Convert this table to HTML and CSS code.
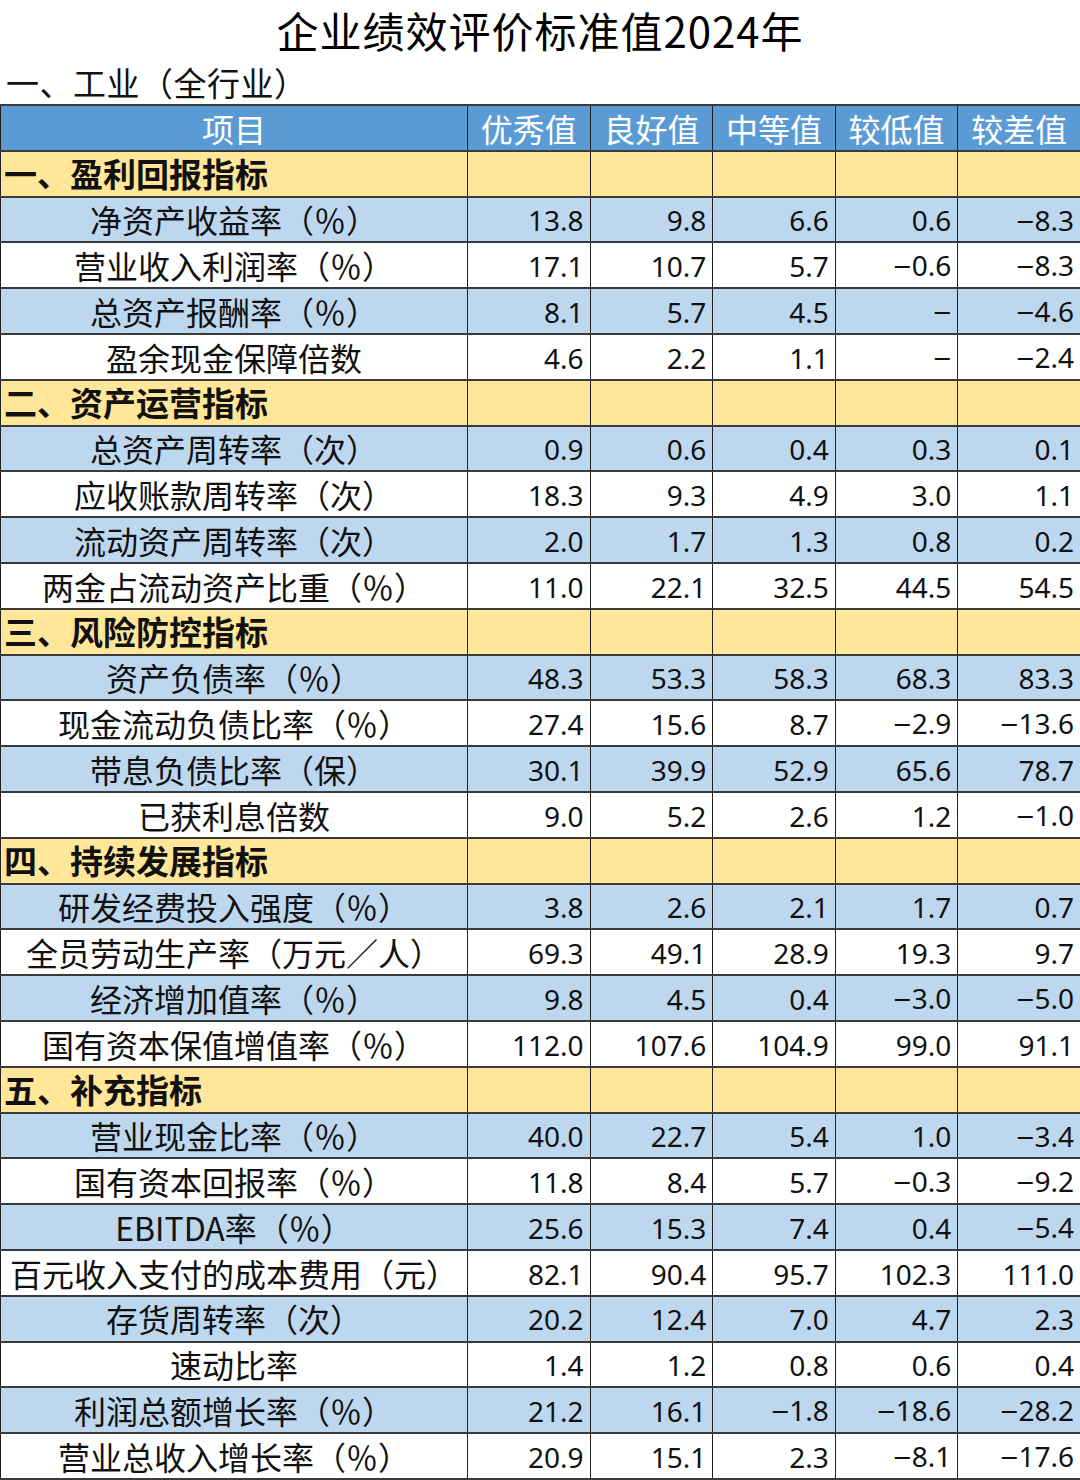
FILE: index.html
```html
<!DOCTYPE html>
<html lang="zh-CN">
<head>
<meta charset="utf-8">
<title>企业绩效评价标准值2024年</title>
<link rel="stylesheet" href="styles.css">
</head>
<body>
<div class="page">
  <h1 class="title">企业绩效评价标准值2024年</h1>
  <div class="subtitle">一、工业（全行业）</div>
  <table class="grid">
    <colgroup>
      <col class="c-name"><col class="c-val"><col class="c-val"><col class="c-val"><col class="c-val"><col class="c-val">
    </colgroup>
    <thead>
      <tr class="head"><th>项目</th><th>优秀值</th><th>良好值</th><th>中等值</th><th>较低值</th><th>较差值</th></tr>
    </thead>
    <tbody>
      <tr class="sec"><td>一、盈利回报指标</td><td></td><td></td><td></td><td></td><td></td></tr>
      <tr class="blue"><td>净资产收益率（％）</td><td>13.8</td><td>9.8</td><td>6.6</td><td>0.6</td><td><span class="neg">−</span>8.3</td></tr>
      <tr class="white"><td>营业收入利润率（％）</td><td>17.1</td><td>10.7</td><td>5.7</td><td><span class="neg">−</span>0.6</td><td><span class="neg">−</span>8.3</td></tr>
      <tr class="blue"><td>总资产报酬率（％）</td><td>8.1</td><td>5.7</td><td>4.5</td><td><span class="neg">−</span></td><td><span class="neg">−</span>4.6</td></tr>
      <tr class="white"><td>盈余现金保障倍数</td><td>4.6</td><td>2.2</td><td>1.1</td><td><span class="neg">−</span></td><td><span class="neg">−</span>2.4</td></tr>
      <tr class="sec"><td>二、资产运营指标</td><td></td><td></td><td></td><td></td><td></td></tr>
      <tr class="blue"><td>总资产周转率（次）</td><td>0.9</td><td>0.6</td><td>0.4</td><td>0.3</td><td>0.1</td></tr>
      <tr class="white"><td>应收账款周转率（次）</td><td>18.3</td><td>9.3</td><td>4.9</td><td>3.0</td><td>1.1</td></tr>
      <tr class="blue"><td>流动资产周转率（次）</td><td>2.0</td><td>1.7</td><td>1.3</td><td>0.8</td><td>0.2</td></tr>
      <tr class="white"><td>两金占流动资产比重（％）</td><td>11.0</td><td>22.1</td><td>32.5</td><td>44.5</td><td>54.5</td></tr>
      <tr class="sec"><td>三、风险防控指标</td><td></td><td></td><td></td><td></td><td></td></tr>
      <tr class="blue"><td>资产负债率（％）</td><td>48.3</td><td>53.3</td><td>58.3</td><td>68.3</td><td>83.3</td></tr>
      <tr class="white"><td>现金流动负债比率（％）</td><td>27.4</td><td>15.6</td><td>8.7</td><td><span class="neg">−</span>2.9</td><td><span class="neg">−</span>13.6</td></tr>
      <tr class="blue"><td>带息负债比率（保）</td><td>30.1</td><td>39.9</td><td>52.9</td><td>65.6</td><td>78.7</td></tr>
      <tr class="white"><td>已获利息倍数</td><td>9.0</td><td>5.2</td><td>2.6</td><td>1.2</td><td><span class="neg">−</span>1.0</td></tr>
      <tr class="sec"><td>四、持续发展指标</td><td></td><td></td><td></td><td></td><td></td></tr>
      <tr class="blue"><td>研发经费投入强度（％）</td><td>3.8</td><td>2.6</td><td>2.1</td><td>1.7</td><td>0.7</td></tr>
      <tr class="white"><td>全员劳动生产率（万元／人）</td><td>69.3</td><td>49.1</td><td>28.9</td><td>19.3</td><td>9.7</td></tr>
      <tr class="blue"><td>经济增加值率（％）</td><td>9.8</td><td>4.5</td><td>0.4</td><td><span class="neg">−</span>3.0</td><td><span class="neg">−</span>5.0</td></tr>
      <tr class="white"><td>国有资本保值增值率（％）</td><td>112.0</td><td>107.6</td><td>104.9</td><td>99.0</td><td>91.1</td></tr>
      <tr class="sec"><td>五、补充指标</td><td></td><td></td><td></td><td></td><td></td></tr>
      <tr class="blue"><td>营业现金比率（％）</td><td>40.0</td><td>22.7</td><td>5.4</td><td>1.0</td><td><span class="neg">−</span>3.4</td></tr>
      <tr class="white"><td>国有资本回报率（％）</td><td>11.8</td><td>8.4</td><td>5.7</td><td><span class="neg">−</span>0.3</td><td><span class="neg">−</span>9.2</td></tr>
      <tr class="blue"><td>EBITDA率（％）</td><td>25.6</td><td>15.3</td><td>7.4</td><td>0.4</td><td><span class="neg">−</span>5.4</td></tr>
      <tr class="white"><td>百元收入支付的成本费用（元）</td><td>82.1</td><td>90.4</td><td>95.7</td><td>102.3</td><td>111.0</td></tr>
      <tr class="blue"><td>存货周转率（次）</td><td>20.2</td><td>12.4</td><td>7.0</td><td>4.7</td><td>2.3</td></tr>
      <tr class="white"><td>速动比率</td><td>1.4</td><td>1.2</td><td>0.8</td><td>0.6</td><td>0.4</td></tr>
      <tr class="blue"><td>利润总额增长率（％）</td><td>21.2</td><td>16.1</td><td><span class="neg">−</span>1.8</td><td><span class="neg">−</span>18.6</td><td><span class="neg">−</span>28.2</td></tr>
      <tr class="white"><td>营业总收入增长率（％）</td><td>20.9</td><td>15.1</td><td>2.3</td><td><span class="neg">−</span>8.1</td><td><span class="neg">−</span>17.6</td></tr>
    </tbody>
  </table>
</div>
</body>
</html>
```

FILE: styles.css
```css
html, body {
  margin: 0;
  padding: 0;
  background: #ffffff;
}

.page {
  width: 1080px;
  font-family: "Noto Sans CJK SC", "Noto Sans", sans-serif;
  color: #111111;
}

.title {
  margin: 0;
  height: 62px;
  line-height: 60px;
  text-align: center;
  font-size: 42px;
  font-weight: 400;
  letter-spacing: 1px;
  color: #000000;
}

.subtitle {
  height: 42px;
  line-height: 40px;
  padding-left: 6px;
  font-size: 33px;
  letter-spacing: 0.5px;
  color: #111111;
}

.grid {
  width: 1080px;
  border-collapse: collapse;
  table-layout: fixed;
}

.c-name { width: 467px; }
.c-val { width: 122.6px; }

.grid th,
.grid td {
  height: 45.8px;
  padding: 0;
  border-top: 2px solid #3a3a3a;
  border-bottom: 2px solid #3a3a3a;
  border-left: 1px solid #222222;
  border-right: 1px solid #222222;
  white-space: nowrap;
  box-sizing: border-box;
  line-height: 1.2;
}

.head th {
  background: #5b9bd5;
  color: #ffffff;
  font-size: 32px;
  font-weight: 400;
  text-align: center;
}

.sec td {
  background: #ffe699;
}

.sec td:first-child {
  text-align: left;
  padding-left: 3px;
  font-size: 33px;
  font-weight: 700;
  color: #111111;
}

.blue td { background: #bdd7ee; }
.white td { background: #ffffff; }

.blue td:first-child,
.white td:first-child {
  text-align: center;
  font-size: 32px;
}

.blue td + td,
.white td + td {
  text-align: right;
  padding-right: 6px;
  padding-top: 3px;
  font-family: "Noto Sans", "Liberation Sans", sans-serif;
  font-size: 28px;
}

.neg {
  font-family: "Liberation Sans", sans-serif;
  display: inline-block;
  transform: scaleX(1.1);
  margin-right: 1px;
}
```
